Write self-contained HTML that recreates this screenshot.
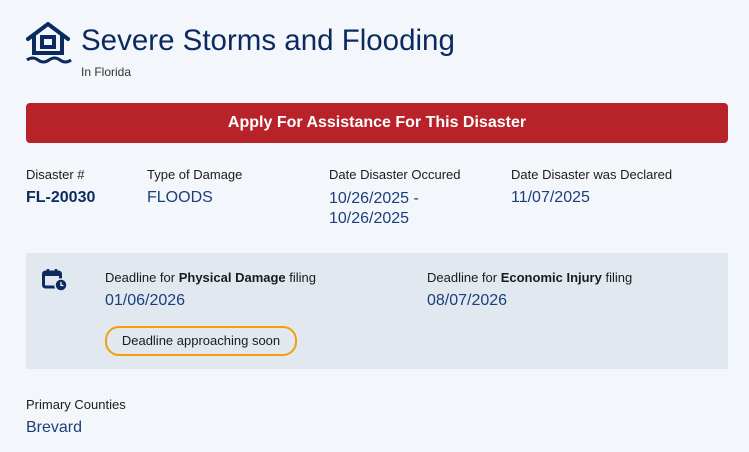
<!DOCTYPE html>
<html><head><style>
body{margin:0;width:749px;height:452px;background:#f3f6fa;font-family:"Liberation Sans",sans-serif;color:#1b1b1b;position:relative;overflow:hidden}
.a{position:absolute;white-space:nowrap}
.lab{font-size:13px;color:#1b1b1b}
.val{font-size:16px;color:#1a3f7a}
</style></head><body>
<svg class="a" style="left:24px;top:20px" width="50" height="44" viewBox="0 0 50 44">
<path d="M4 19 L24 4 L44 19" fill="none" stroke="#0b2a5f" stroke-width="4" stroke-linecap="round" stroke-linejoin="round"/>
<path d="M10 15 V33 H38 V15" fill="none" stroke="#0b2a5f" stroke-width="4"/>
<rect x="18" y="17" width="12" height="10" fill="none" stroke="#0b2a5f" stroke-width="4"/>
<path d="M3 40 q5.5-4 11 0 t11 0 t11 0 t11 0" fill="none" stroke="#0b2a5f" stroke-width="3"/>
</svg>
<div class="a" style="left:81px;top:24px;font-size:29.5px;color:#0b2a5f">Severe Storms and Flooding</div>
<div class="a" style="left:81px;top:65px;font-size:12px;color:#333">In Florida</div>
<div class="a" style="left:26px;top:103px;width:702px;height:40px;background:#b8232a;border-radius:4px;color:#fff;font-weight:bold;font-size:16px;text-align:center;line-height:40px">Apply For Assistance For This Disaster</div>
<div class="a lab" style="left:26px;top:167px">Disaster #</div>
<div class="a" style="left:26px;top:189px;font-size:16px;font-weight:bold;color:#0b2a5f">FL-20030</div>
<div class="a lab" style="left:147px;top:167px">Type of Damage</div>
<div class="a val" style="left:147px;top:189px">FLOODS</div>
<div class="a lab" style="left:329px;top:167px">Date Disaster Occured</div>
<div class="a val" style="left:329px;top:189px;line-height:20px">10/26/2025 -<br>10/26/2025</div>
<div class="a lab" style="left:511px;top:167px">Date Disaster was Declared</div>
<div class="a val" style="left:511px;top:189px">11/07/2025</div>
<div class="a" style="left:26px;top:253px;width:702px;height:116px;background:#e2e8ef"></div>
<svg class="a" style="left:42px;top:268px" width="26" height="24" viewBox="0 0 26 24">
<rect x="1.5" y="4" width="17" height="15" rx="2" fill="none" stroke="#0b2a5f" stroke-width="3"/>
<rect x="1.5" y="4" width="17" height="4" fill="#0b2a5f"/>
<path d="M6 1v5M14 1v5" stroke="#0b2a5f" stroke-width="2.5"/>
<circle cx="19" cy="17" r="6" fill="#0b2a5f" stroke="#e2e8ef" stroke-width="1.5"/>
<path d="M19 14v3.5h2.5" stroke="#fff" stroke-width="1.3" fill="none"/>
</svg>
<div class="a lab" style="left:105px;top:270px">Deadline for <b>Physical Damage</b> filing</div>
<div class="a val" style="left:105px;top:292px">01/06/2026</div>
<div class="a lab" style="left:427px;top:270px">Deadline for <b>Economic Injury</b> filing</div>
<div class="a val" style="left:427px;top:292px">08/07/2026</div>
<div class="a" style="left:105px;top:326px;width:188px;height:26px;border:2.5px solid #f59e0b;border-radius:14px;font-size:13px;text-align:center;line-height:26px">Deadline approaching soon</div>
<div class="a lab" style="left:26px;top:397px">Primary Counties</div>
<div class="a val" style="left:26px;top:419px">Brevard</div>
</body></html>
